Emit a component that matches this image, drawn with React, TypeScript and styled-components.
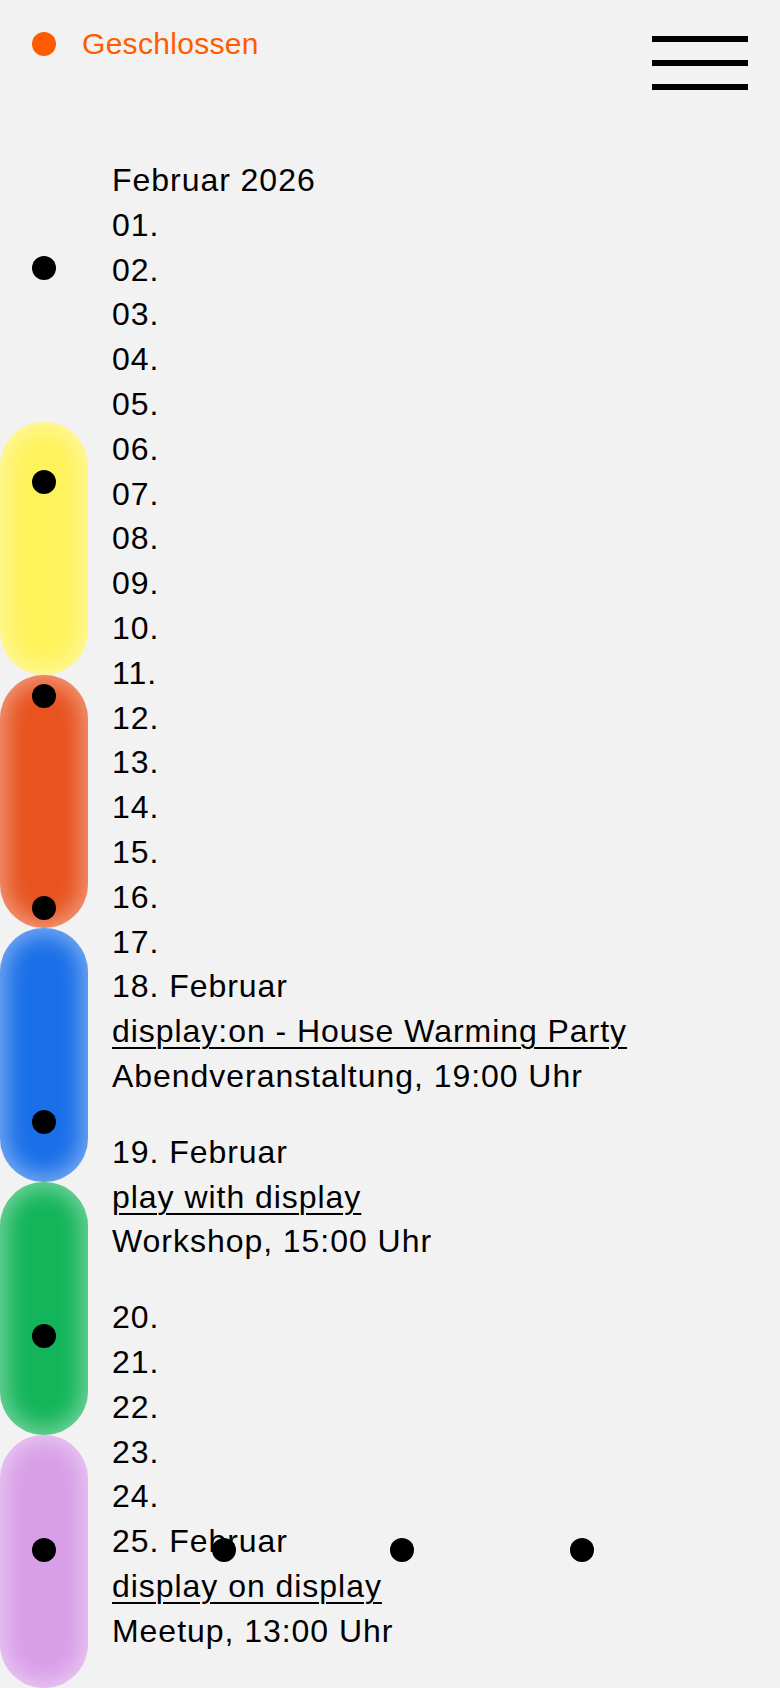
import styled, { createGlobalStyle } from "styled-components";

const GlobalStyle = createGlobalStyle`
  html, body {
    margin: 0;
    padding: 0;
    background: #f2f2f2;
  }
  body {
    font-family: "Liberation Sans", Arial, sans-serif;
    color: #000;
    -webkit-font-smoothing: antialiased;
  }
`;

const Page = styled.div`
  position: relative;
  min-height: 100vh;
  display: grid;
  grid-template-columns: 88px 1fr;
  grid-template-rows: auto 1fr;
  overflow: hidden;
`;

const Header = styled.header`
  grid-column: 1 / -1;
  display: flex;
  justify-content: space-between;
  align-items: flex-start;
  padding: 32px 32px 0 32px;
`;

const Status = styled.div`
  display: flex;
  align-items: center;
  gap: 26px;
  height: 24px;
  color: #ff5c00;
  font-size: 30px;
  letter-spacing: 0.01em;
`;

const StatusDot = styled.span`
  width: 24px;
  height: 24px;
  border-radius: 50%;
  background: #ff5c00;
`;

const MenuButton = styled.button`
  margin-top: 4px;
  padding: 0;
  border: 0;
  background: none;
  display: flex;
  flex-direction: column;
  gap: 18px;
  cursor: pointer;
`;

const MenuBar = styled.span`
  display: block;
  width: 96px;
  height: 6px;
  background: #000;
`;

const Rail = styled.div`
  grid-column: 1;
  grid-row: 2;
  align-self: end;
  display: flex;
  flex-direction: column;
`;

const Pill = styled.div<{ $color: string }>`
  height: 15vh;
  border-radius: 44px;
  background: ${(p) => p.$color};
  box-shadow: inset 0 0 22px 6px rgba(255, 255, 255, 0.42);
`;

const Calendar = styled.main`
  grid-column: 2;
  grid-row: 2;
  padding: 68px 0 0 24px;
  font-size: 32px;
  line-height: 44.8px;
  letter-spacing: 0.03em;
`;

const Line = styled.div``;

const Event = styled.div`
  margin-bottom: 31px;
  &:last-child {
    margin-bottom: 0;
  }
`;

const EventLink = styled.a`
  color: inherit;
  text-decoration: underline;
  text-decoration-thickness: 2px;
  text-underline-offset: 5px;
`;

const Dot = styled.span<{ $x: number; $y: number }>`
  position: absolute;
  left: ${(p) => p.$x - 12}px;
  top: ${(p) => p.$y - 12}px;
  width: 24px;
  height: 24px;
  border-radius: 50%;
  background: #000;
  z-index: 2;
`;

const pills = ["#fff35c", "#e8531f", "#1a70e8", "#14b55a", "#d89ee8"];

const dots = [
  { x: 44, y: 268 },
  { x: 44, y: 482 },
  { x: 44, y: 696 },
  { x: 44, y: 908 },
  { x: 44, y: 1122 },
  { x: 44, y: 1336 },
  { x: 44, y: 1550 },
  { x: 224, y: 1550 },
  { x: 402, y: 1550 },
  { x: 582, y: 1550 },
];

type Day =
  | { day: number }
  | { day: number; title: string; meta: string };

const days: Day[] = [];
for (let d = 1; d <= 25; d++) {
  if (d === 18)
    days.push({ day: d, title: "display:on - House Warming Party", meta: "Abendveranstaltung, 19:00 Uhr" });
  else if (d === 19)
    days.push({ day: d, title: "play with display", meta: "Workshop, 15:00 Uhr" });
  else if (d === 25)
    days.push({ day: d, title: "display on display", meta: "Meetup, 13:00 Uhr" });
  else days.push({ day: d });
}

const pad = (n: number) => String(n).padStart(2, "0");

function App() {
  return (
    <>
      <GlobalStyle />
      <Page>
        <Header>
          <Status>
            <StatusDot />
            Geschlossen
          </Status>
          <MenuButton aria-label="Menü">
            <MenuBar />
            <MenuBar />
            <MenuBar />
          </MenuButton>
        </Header>
        <Rail>
          {pills.map((c) => (
            <Pill key={c} $color={c} />
          ))}
        </Rail>
        <Calendar>
          <Line>Februar 2026</Line>
          {days.map((d) =>
            "title" in d ? (
              <Event key={d.day}>
                <Line>{pad(d.day)}. Februar</Line>
                <Line>
                  <EventLink href="#">{d.title}</EventLink>
                </Line>
                <Line>{d.meta}</Line>
              </Event>
            ) : (
              <Line key={d.day}>{pad(d.day)}.</Line>
            )
          )}
        </Calendar>
        {dots.map((d, i) => (
          <Dot key={i} $x={d.x} $y={d.y} />
        ))}
      </Page>
    </>
  );
}

export default App;
